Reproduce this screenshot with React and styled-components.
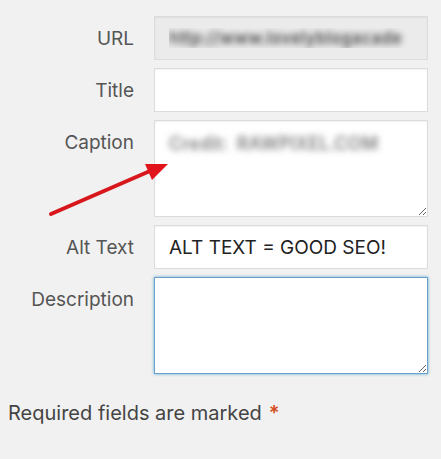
import React from "react";
import styled, { createGlobalStyle } from "styled-components";

const Global = createGlobalStyle`
  html, body { margin: 0; padding: 0; background: #f1f1f1; }
  body { font-family: Inter, "Noto Sans", "DejaVu Sans", sans-serif; }
`;

const Page = styled.div`
  position: relative;
  width: 441px;
  height: 459px;
  box-sizing: border-box;
  padding: 16px 13px 0 8px;
  background: #f1f1f1;
`;

const Form = styled.div`
  display: grid;
  grid-template-columns: 126px 274px;
  column-gap: 20px;
  row-gap: 8px;
`;

const Label = styled.label`
  text-align: right;
  font-size: 19px;
  line-height: 24px;
  color: #555;
  padding-top: 11px;
`;

const fieldBase = `
  box-sizing: border-box;
  width: 274px;
  margin: 0;
  border: 1px solid #dcdcdc;
  border-radius: 0;
  background: #fff;
  box-shadow: inset 0 1px 2px rgba(0,0,0,0.06);
  font-family: Inter, "Noto Sans", "DejaVu Sans", sans-serif;
  font-size: 19px;
  color: #222;
  outline: none;
  padding: 0 14px;
`;

const Input = styled.input`
  ${fieldBase}
  height: 44px;
  background: ${(p) => (p.$readonly ? "#ebebeb" : "#fff")};
  ${(p) =>
    p.$blurred &&
    `color: transparent; text-shadow: 0 0 6px rgba(60,60,60,0.9); font-size: 17px; font-weight: 600;`}
`;

const Area = styled.textarea`
  ${fieldBase}
  height: 97px;
  padding: 12px 14px;
  resize: vertical;
  display: block;
  ${(p) =>
    p.$blurred &&
    `color: transparent; text-shadow: 0 0 6px rgba(90,90,90,0.75); font-size: 18px; font-weight: 600;`}
  ${(p) =>
    p.$focused &&
    `border-color: #6a9fd0; box-shadow: 0 0 3px rgba(30,140,190,0.7);`}
`;

const Footer = styled.p`
  margin: 26px 0 0 0;
  font-size: 20px;
  line-height: 26px;
  color: #444;
`;

const Star = styled.span`
  color: #d54e21;
  font-weight: 600;
  margin-left: 7px;
`;

const ArrowOverlay = styled.svg`
  position: absolute;
  left: 0;
  top: 0;
  pointer-events: none;
`;

export default function App() {
  return (
    <Page>
      <Global />
      <Form>
        <Label>URL</Label>
        <Input $readonly $blurred readOnly value="http://www.lovelyblogacade" />
        <Label>Title</Label>
        <Input defaultValue="" />
        <Label>Caption</Label>
        <Area $blurred readOnly value="Credit:  RAWPIXEL.COM" />
        <Label>Alt Text</Label>
        <Input readOnly value="ALT TEXT = GOOD SEO!" />
        <Label>Description</Label>
        <Area $focused defaultValue="" />
      </Form>
      <Footer>
        Required fields are marked<Star>*</Star>
      </Footer>
      <ArrowOverlay width="441" height="459" viewBox="0 0 441 459">
        <line x1="51" y1="214" x2="150" y2="171" stroke="#d8171c" strokeWidth="4" strokeLinecap="round" />
        <polygon points="145,164 168,164 152,180" fill="#e0141a" />
      </ArrowOverlay>
    </Page>
  );
}
